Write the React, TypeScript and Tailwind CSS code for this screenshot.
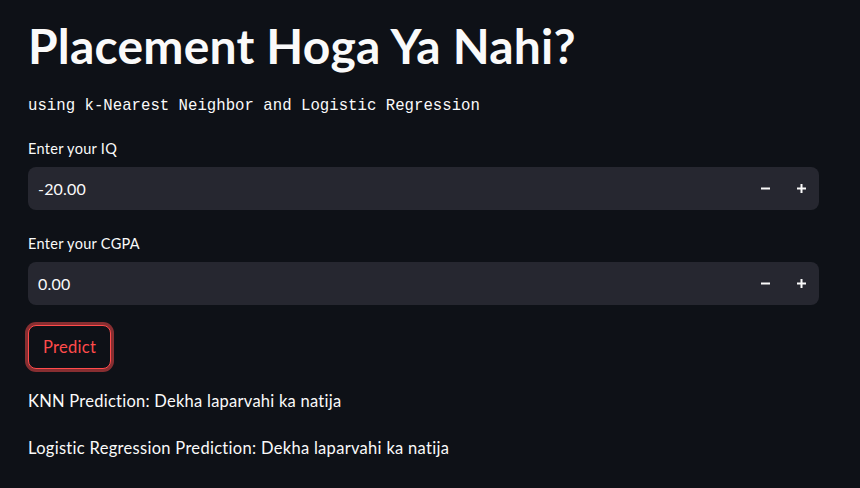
import React from 'react';

const sans = "font-['Lato','Noto_Sans',sans-serif]";

const NumberInput = ({ label, value }: { label: string; value: string }) => (
  <div className="flex flex-col">
    <label className={`${sans} text-[14.5px] leading-[20px] tracking-[0.3px] text-[#fafafa] mb-[8px]`}>{label}</label>
    <div className="flex items-center h-[43px] w-[791px] rounded-[8px] bg-[#262730]">
      <span className={`${sans} flex-1 pl-[10px] text-[16px] tracking-[0.2px] text-[#fafafa]`}>{value}</span>
      <button className="w-[36px] h-full flex items-center justify-center text-[#fafafa]">
        <svg width="11" height="11" viewBox="0 0 11 11">
          <rect x="1" y="4.5" width="9" height="2" fill="currentColor" />
        </svg>
      </button>
      <button className="w-[36px] h-full flex items-center justify-center text-[#fafafa]">
        <svg width="11" height="11" viewBox="0 0 11 11">
          <rect x="1" y="4.5" width="9" height="2" fill="currentColor" />
          <rect x="4.5" y="1" width="2" height="9" fill="currentColor" />
        </svg>
      </button>
    </div>
  </div>
);

export default function App() {
  return (
    <div className="w-[860px] h-[488px] bg-[#0e1117] overflow-hidden">
      <div className="pl-[28px] pt-[18px] flex flex-col">
        <h1 className={`${sans} text-[48px] leading-[56px] font-bold text-[#fafafa] tracking-[0.2px]`}>
          Placement Hoga Ya Nahi?
        </h1>
        <p className="font-['Liberation_Mono',monospace] text-[15.7px] leading-[22px] text-[#fafafa] mt-[21px]">
          using k-Nearest Neighbor and Logistic Regression
        </p>
        <div className="mt-[22px] flex flex-col gap-[24px]">
          <NumberInput label="Enter your IQ" value="-20.00" />
          <NumberInput label="Enter your CGPA" value="0.00" />
        </div>
        <div className="mt-[20px]">
          <button
            className={`${sans} h-[44px] px-[14px] rounded-[8px] border border-[#ff4b4b] text-[#ff4b4b] text-[16.5px] tracking-[0.3px] ring-[3px] ring-[#ff4b4b]/50 bg-[#0e1117]`}
          >
            Predict
          </button>
        </div>
        <p className={`${sans} text-[16.5px] leading-[24px] tracking-[0.25px] text-[#fafafa] mt-[20px]`}>
          KNN Prediction: Dekha laparvahi ka natija
        </p>
        <p className={`${sans} text-[16.5px] leading-[24px] tracking-[0.3px] text-[#fafafa] mt-[23px]`}>
          Logistic Regression Prediction: Dekha laparvahi ka natija
        </p>
      </div>
    </div>
  );
}
